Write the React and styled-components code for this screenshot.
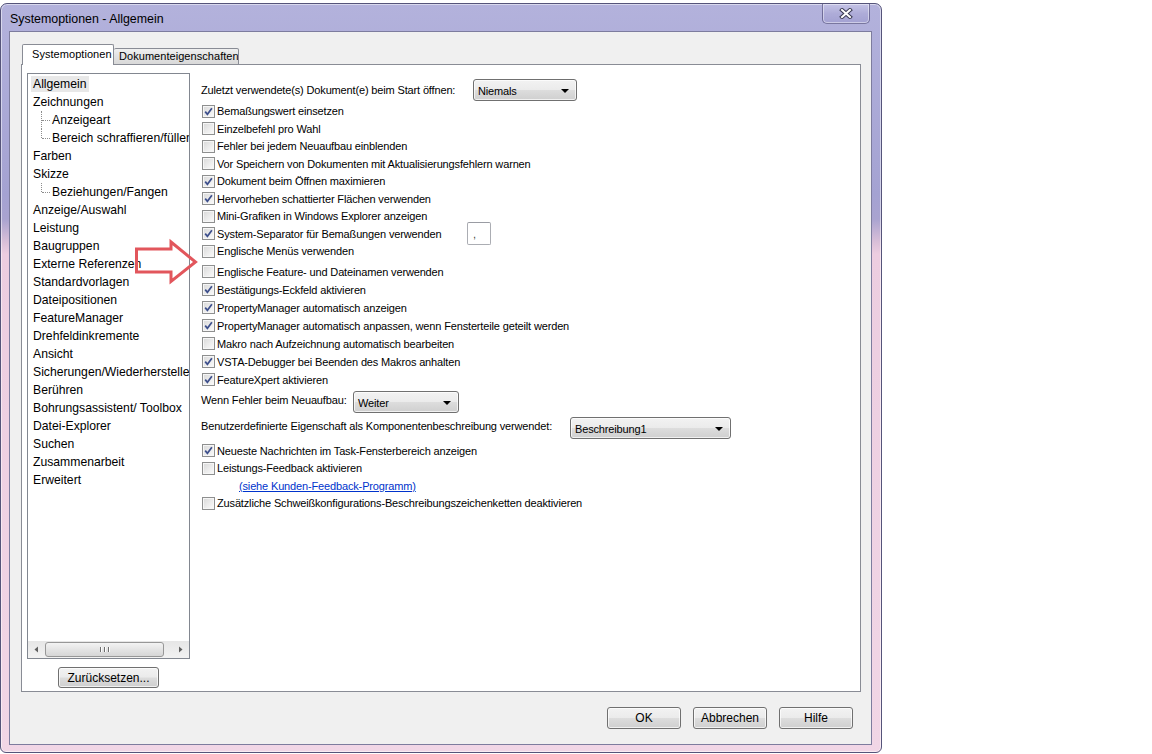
import React from 'react';
import styled, { createGlobalStyle } from 'styled-components';

const GlobalStyle = createGlobalStyle`
  html, body {
    margin: 0;
    padding: 0;
    background: #fff;
  }
  body {
    font-family: "Liberation Sans", Arial, sans-serif;
    color: #000;
  }
  * {
    box-sizing: border-box;
  }
`;

const Page = styled.div`
  width: 1152px;
  height: 754px;
  overflow: hidden;
  background: #fff;
  padding-top: 3px;
`;

const Window = styled.div`
  width: 882px;
  height: 750px;
  border: 1px solid #55547a;
  border-radius: 7px 7px 6px 6px;
  padding: 0 9px 7px 8px;
  background: linear-gradient(
    180deg,
    #b3b2dc 0px,
    #a4a2d2 190px,
    #a9a3d0 215px,
    #d9bfd8 238px,
    #eccde0 250px,
    #f1d6e6 100%
  );
  box-shadow: inset 0 0 0 1px rgba(255, 255, 255, 0.5);
  display: flex;
  flex-direction: column;
`;

const TitleBar = styled.div`
  height: 28px;
  display: flex;
  align-items: flex-start;
  justify-content: space-between;
  padding-left: 1px;
`;

const Title = styled.div`
  font-size: 12.4px;
  line-height: 15px;
  padding-top: 8px;
  color: #000;
`;

const CloseButton = styled.div`
  width: 48px;
  height: 20px;
  margin-right: 2px;
  border: 1px solid rgba(60, 58, 100, 0.55);
  border-top: none;
  border-radius: 0 0 5px 5px;
  background: linear-gradient(180deg, #c4c3e6 0%, #aeacd8 50%, #a3a1d2 100%);
  box-shadow: inset 0 0 0 1px rgba(255, 255, 255, 0.45);
  display: flex;
  align-items: center;
  justify-content: center;
`;

const Client = styled.div`
  flex: 1;
  border: 1px solid #7d7c9e;
  background: #f0f0f0;
  padding: 12px 10px 0 11px;
  display: flex;
  flex-direction: column;
`;

const TabsRow = styled.div`
  height: 21px;
  display: flex;
  align-items: flex-end;
  margin-bottom: -1px;
  position: relative;
  z-index: 1;
`;

const Tab = styled.div`
  height: ${({ active }) => (active ? '21px' : '17px')};
  width: ${({ w }) => w}px;
  margin-left: ${({ active }) => (active ? '1px' : '0')};
  border: 1px solid #898c95;
  border-bottom: ${({ active }) => (active ? 'none' : '1px solid #898c95')};
  border-left: ${({ active }) => (active ? '1px solid #898c95' : 'none')};
  border-radius: 2px 2px 0 0;
  background: ${({ active }) =>
    active ? '#fff' : 'linear-gradient(180deg, #f0f0f0 0%, #e2e2e2 50%, #d9d9d9 100%)'};
  font-size: 11px;
  letter-spacing: 0.05px;
  line-height: 15px;
  padding: ${({ active }) => (active ? '2px 0 0 9px' : '0 0 0 5px')};
  white-space: nowrap;
  overflow: hidden;
`;

const Panel = styled.div`
  height: 628px;
  border: 1px solid #898c95;
  background: #fff;
  display: flex;
  position: relative;
`;

const LeftColumn = styled.div`
  padding: 8px 0 0 5px;
  display: flex;
  flex-direction: column;
  align-items: center;
`;

const TreeBox = styled.div`
  width: 163px;
  height: 586px;
  border: 1px solid #828790;
  display: flex;
  flex-direction: column;
  background: #fff;
`;

const TreeList = styled.div`
  flex: 1;
  overflow: hidden;
  padding: 1px 0 0 3px;
`;

const TreeItem = styled.div`
  height: 18px;
  display: flex;
  align-items: center;
  white-space: nowrap;
  font-size: 12.2px;
  padding-left: ${({ level }) => (level ? '10px' : '0')};
`;

const ItemLabel = styled.span`
  line-height: 16px;
  padding: 0 2px;
  background: ${({ selected }) => (selected ? '#e8e8e8' : 'transparent')};
`;

const Connector = styled.span`
  position: relative;
  width: 9px;
  height: 18px;
  flex: none;
  &::before {
    content: '';
    position: absolute;
    left: 0;
    top: 0;
    height: ${({ last }) => (last ? '9px' : '18px')};
    border-left: 1px dotted #8d8d8d;
  }
  &::after {
    content: '';
    position: absolute;
    left: 1px;
    top: 9px;
    width: 8px;
    border-top: 1px dotted #8d8d8d;
  }
`;

const HScroll = styled.div`
  height: 17px;
  display: flex;
  align-items: center;
  background: linear-gradient(180deg, #e6e6e6 0%, #f2f2f2 100%);
`;

const ScrollArrow = styled.div`
  width: 17px;
  height: 17px;
  display: flex;
  align-items: center;
  justify-content: center;
`;

const ScrollTrack = styled.div`
  flex: 1;
  height: 17px;
  display: flex;
  align-items: center;
`;

const ScrollThumb = styled.div`
  width: ${({ w }) => w}px;
  height: 15px;
  border: 1px solid #979797;
  border-radius: 3px;
  background: linear-gradient(180deg, #f3f3f3 0%, #e4e4e4 50%, #d6d6d6 100%);
  display: flex;
  align-items: center;
  justify-content: center;
  gap: 1px;
`;

const Grip = styled.span`
  width: 1px;
  height: 5px;
  background: #6e6e6e;
  box-shadow: 1px 0 0 #fff;
  margin: 0 1px;
`;

const Button = styled.button`
  width: ${({ w }) => w}px;
  height: ${({ h }) => h || 22}px;
  border: 1px solid #707070;
  border-radius: 3px;
  background: linear-gradient(180deg, #f2f2f2 0%, #ebebeb 49%, #dddddd 51%, #cfcfcf 100%);
  box-shadow: inset 0 0 0 1px rgba(255, 255, 255, 0.7);
  font-family: "Liberation Sans", Arial, sans-serif;
  font-size: 12px;
  color: #000;
  padding: 0;
  margin-top: ${({ mt }) => mt || 0}px;
`;

const Content = styled.div`
  padding: 14px 0 0 11px;
  display: flex;
  flex-direction: column;
  font-size: 11px;
  letter-spacing: -0.15px;
`;

const Row = styled.div`
  height: ${({ h }) => h}px;
  margin-top: ${({ mt }) => mt || 0}px;
  display: flex;
  align-items: ${({ top }) => (top ? 'flex-start' : 'center')};
  white-space: nowrap;
`;

const Label = styled.span`
  width: ${({ w }) => (w ? `${w}px` : 'auto')};
  flex: none;
  padding-top: ${({ pt }) => pt || 0}px;
`;

const CheckBox = styled.span`
  width: 13px;
  height: 13px;
  flex: none;
  margin: 0 2px 0 1px;
  border: 1px solid #8e8f8f;
  background: linear-gradient(135deg, #d8d8d8 0%, #ececec 55%, #fbfbfb 100%);
  box-shadow: inset 0 0 0 1px #f6f6f6;
  display: flex;
  align-items: center;
  justify-content: center;
`;

const Combo = styled.div`
  width: ${({ w }) => w}px;
  height: 22px;
  flex: none;
  border: 1px solid #707070;
  border-radius: 3px;
  background: linear-gradient(180deg, #f2f2f2 0%, #ebebeb 49%, #dddddd 51%, #cfcfcf 100%);
  box-shadow: inset 0 0 0 1px rgba(255, 255, 255, 0.7);
  display: flex;
  align-items: center;
  justify-content: space-between;
  padding: 2px 7px 0 4px;
  font-size: 11px;
`;

const DropArrow = styled.span`
  width: 0;
  height: 0;
  border-left: 4px solid transparent;
  border-right: 4px solid transparent;
  border-top: 4px solid #000;
`;

const SmallInput = styled.div`
  width: 24px;
  height: 23px;
  flex: none;
  border: 1px solid #abadb3;
  border-top-color: #9a9ca3;
  border-radius: 2px;
  background: #fff;
  padding: 4px 0 0 5px;
  font-size: 11px;
  line-height: 14px;
  color: #444;
`;

const LinkText = styled.a`
  color: #0033cc;
  text-decoration: underline;
  margin-left: 38px;
  cursor: pointer;
`;

const Footer = styled.div`
  height: 52px;
  display: flex;
  justify-content: flex-end;
  align-items: flex-start;
  padding: 15px 8px 0 0;
  gap: 12px;
`;

const ArrowMark = styled.svg`
  position: absolute;
  left: 112px;
  top: 175px;
  overflow: visible;
`;

const treeItems = [
  { label: 'Allgemein', selected: true },
  { label: 'Zeichnungen' },
  { label: 'Anzeigeart', level: 1 },
  { label: 'Bereich schraffieren/füllen', level: 1, last: true },
  { label: 'Farben' },
  { label: 'Skizze' },
  { label: 'Beziehungen/Fangen', level: 1, last: true },
  { label: 'Anzeige/Auswahl' },
  { label: 'Leistung' },
  { label: 'Baugruppen' },
  { label: 'Externe Referenzen' },
  { label: 'Standardvorlagen' },
  { label: 'Dateipositionen' },
  { label: 'FeatureManager' },
  { label: 'Drehfeldinkremente' },
  { label: 'Ansicht' },
  { label: 'Sicherungen/Wiederherstellen' },
  { label: 'Berühren' },
  { label: 'Bohrungsassistent/ Toolbox' },
  { label: 'Datei-Explorer' },
  { label: 'Suchen' },
  { label: 'Zusammenarbeit' },
  { label: 'Erweitert' },
];

const options1 = [
  { label: 'Bemaßungswert einsetzen', checked: true },
  { label: 'Einzelbefehl pro Wahl' },
  { label: 'Fehler bei jedem Neuaufbau einblenden' },
  { label: 'Vor Speichern von Dokumenten mit Aktualisierungsfehlern warnen' },
  { label: 'Dokument beim Öffnen maximieren', checked: true },
  { label: 'Hervorheben schattierter Flächen verwenden', checked: true },
  { label: 'Mini-Grafiken in Windows Explorer anzeigen' },
  { label: 'System-Separator für Bemaßungen verwenden', checked: true, separator: true },
  { label: 'Englische Menüs verwenden' },
];

const options2 = [
  { label: 'Englische Feature- und Dateinamen verwenden' },
  { label: 'Bestätigungs-Eckfeld aktivieren', checked: true },
  { label: 'PropertyManager automatisch anzeigen', checked: true },
  { label: 'PropertyManager automatisch anpassen, wenn Fensterteile geteilt werden', checked: true },
  { label: 'Makro nach Aufzeichnung automatisch bearbeiten' },
  { label: 'VSTA-Debugger bei Beenden des Makros anhalten', checked: true },
  { label: 'FeatureXpert aktivieren', checked: true },
];

const CheckMark = () => (
  <svg width="9" height="9" viewBox="0 0 9 9">
    <path d="M1.2 4.6 L3.4 7.3 L7.9 1.2" fill="none" stroke="#3d4f8c" strokeWidth="1.7" />
  </svg>
);

const Check = ({ checked }) => <CheckBox>{checked && <CheckMark />}</CheckBox>;

const CheckRow = ({ option, h, mt }) => (
  <Row h={h} mt={mt}>
    <Check checked={option.checked} />
    {option.separator ? (
      <>
        <Label w={250}>{option.label}</Label>
        <SmallInput>,</SmallInput>
      </>
    ) : (
      <Label>{option.label}</Label>
    )}
  </Row>
);

const CloseGlyph = () => (
  <svg width="14" height="11" viewBox="0 0 14 11">
    <path d="M3 2 L11 9 M11 2 L3 9" stroke="#3a3a52" strokeWidth="4" strokeLinecap="square" />
    <path d="M3 2 L11 9 M11 2 L3 9" stroke="#fff" strokeWidth="2" strokeLinecap="square" />
  </svg>
);

const SmallTriangle = ({ dir }) => (
  <svg width="5" height="7" viewBox="0 0 5 7">
    {dir === 'left' ? (
      <path d="M4 0.5 L0.5 3.5 L4 6.5 Z" fill="#606060" />
    ) : (
      <path d="M1 0.5 L4.5 3.5 L1 6.5 Z" fill="#606060" />
    )}
  </svg>
);

const App = () => {
  return (
    <Page>
      <GlobalStyle />
      <Window>
        <TitleBar>
          <Title>Systemoptionen - Allgemein</Title>
          <CloseButton>
            <CloseGlyph />
          </CloseButton>
        </TitleBar>
        <Client>
          <TabsRow>
            <Tab active w={92}>Systemoptionen</Tab>
            <Tab w={125}>Dokumenteigenschaften</Tab>
          </TabsRow>
          <Panel>
            <LeftColumn>
              <TreeBox>
                <TreeList>
                  {treeItems.map((item) => (
                    <TreeItem key={item.label} level={item.level}>
                      {item.level ? <Connector last={item.last} /> : null}
                      <ItemLabel selected={item.selected}>{item.label}</ItemLabel>
                    </TreeItem>
                  ))}
                </TreeList>
                <HScroll>
                  <ScrollArrow>
                    <SmallTriangle dir="left" />
                  </ScrollArrow>
                  <ScrollTrack>
                    <ScrollThumb w={119}>
                      <Grip />
                      <Grip />
                      <Grip />
                    </ScrollThumb>
                  </ScrollTrack>
                  <ScrollArrow>
                    <SmallTriangle dir="right" />
                  </ScrollArrow>
                </HScroll>
              </TreeBox>
              <Button w={101} h={21} mt={8}>Zurücksetzen...</Button>
            </LeftColumn>

            <Content>
              <Row h={22}>
                <Label w={272}>Zuletzt verwendete(s) Dokument(e) beim Start öffnen:</Label>
                <Combo w={104}>
                  Niemals
                  <DropArrow />
                </Combo>
              </Row>
              {options1.map((o, i) => (
                <CheckRow key={o.label} option={o} h={17.5} mt={i === 0 ? 1.5 : 0} />
              ))}
              {options2.map((o, i) => (
                <CheckRow key={o.label} option={o} h={18} mt={i === 0 ? 2.5 : 0} />
              ))}
              <Row h={22} mt={2} top>
                <Label w={152} pt={3}>Wenn Fehler beim Neuaufbau:</Label>
                <Combo w={106}>
                  Weiter
                  <DropArrow />
                </Combo>
              </Row>
              <Row h={22} mt={4} top>
                <Label w={369} pt={3}>Benutzerdefinierte Eigenschaft als Komponentenbeschreibung verwendet:</Label>
                <Combo w={161}>
                  Beschreibung1
                  <DropArrow />
                </Combo>
              </Row>
              <CheckRow option={{ label: 'Neueste Nachrichten im Task-Fensterbereich anzeigen', checked: true }} h={17.5} mt={3.5} />
              <CheckRow option={{ label: 'Leistungs-Feedback aktivieren' }} h={17.5} />
              <Row h={17.5}>
                <LinkText>(siehe Kunden-Feedback-Programm)</LinkText>
              </Row>
              <CheckRow option={{ label: 'Zusätzliche Schweißkonfigurations-Beschreibungszeichenketten deaktivieren' }} h={17.5} />
            </Content>

            <ArrowMark width="64" height="44" viewBox="0 0 64 44">
              <path
                d="M2.5 9 H37 V2 L61.5 22 L37 41.5 V32 H2.5 Z"
                fill="none"
                stroke="#e2565c"
                strokeWidth="3"
                strokeLinejoin="miter"
              />
            </ArrowMark>
          </Panel>
          <Footer>
            <Button w={74}>OK</Button>
            <Button w={74}>Abbrechen</Button>
            <Button w={74}>Hilfe</Button>
          </Footer>
        </Client>
      </Window>
    </Page>
  );
};

export default App;
